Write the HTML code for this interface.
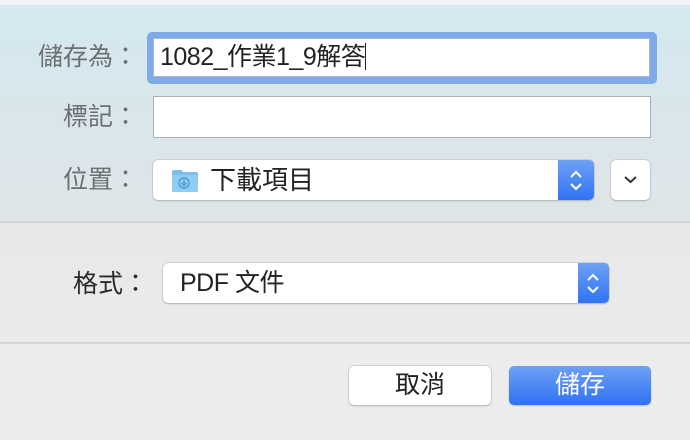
<!DOCTYPE html>
<html><head><meta charset="utf-8"><style>
*{margin:0;padding:0;box-sizing:border-box}
body{width:690px;height:440px;overflow:hidden;position:relative;font-family:"Liberation Sans","Noto Sans CJK TC",sans-serif;background:#ebebeb}
.a{position:absolute}
.lbl{color:#6c7073;font-size:25px;text-align:right;line-height:30px}
.pop{background:#fff;border-radius:5px;box-shadow:0 0 0 0.5px #b8b8b8,0 1px 1.5px rgba(0,0,0,.25)}
.step{position:absolute;right:0;top:0;bottom:0;width:36px;background:linear-gradient(#6ea1f5,#2f74f3);border-radius:0 5px 5px 0}
</style></head><body>
<div class="a" style="left:0;top:0;width:690px;height:5px;background:#f2f3f4"></div>
<div class="a" style="left:0;top:5px;width:690px;height:216px;background:linear-gradient(#d3e8ef,#dfe5e8)"></div>
<div class="a" style="left:0;top:221px;width:690px;height:2px;background:#d2d4d5"></div>
<div class="a" style="left:0;top:223px;width:690px;height:119px;background:linear-gradient(#e6e8e9,#ebebeb)"></div>
<div class="a" style="left:0;top:342px;width:690px;height:2px;background:#d4d4d4"></div>
<div class="a" style="left:0;top:344px;width:690px;height:96px;background:#ececec"></div>

<div class="a lbl" style="left:0px;top:42px;width:138px">儲存為：</div>
<div class="a" style="left:147px;top:32px;width:510px;height:52px;background:#7eaaea;border-radius:5px"></div>
<div class="a" style="left:153px;top:38px;width:497px;height:39px;background:#fff;border:1px solid #a9b9cc"></div>
<div class="a" style="left:160px;top:42px;font-size:25px;line-height:30px;color:#222;letter-spacing:-0.5px">1082_作業1_9解答<span style="display:inline-block;width:1px;height:27px;background:#222;vertical-align:-5px"></span></div>

<div class="a lbl" style="left:0px;top:102px;width:138px">標記：</div>
<div class="a" style="left:153px;top:96px;width:498px;height:42px;background:#fff;border:1px solid #aab0b3"></div>

<div class="a lbl" style="left:0px;top:165px;width:138px">位置：</div>
<div class="a pop" style="left:153px;top:160px;width:441px;height:40px">
 <svg class="a" style="left:18px;top:9px" width="28" height="24" viewBox="0 0 28 24"><path d="M1 3a2 2 0 0 1 2-2h7l2 2h13a2 2 0 0 1 2 2v16a2 2 0 0 1-2 2H3a2 2 0 0 1-2-2z" fill="#7cc0ea"/><rect x="1" y="6" width="26" height="17" rx="2" fill="#8fcdf2"/><circle cx="13" cy="14" r="5" fill="none" stroke="#4f9ed0" stroke-width="1.5"/><path d="M13 10.5v6M10.5 14l2.5 2.5 2.5-2.5" fill="none" stroke="#4f9ed0" stroke-width="1.5"/></svg>
 <div class="a" style="left:57px;top:5px;font-size:26px;line-height:30px;color:#222">下載項目</div>
 <div class="step"><svg width="36" height="40"><path d="M13 17l5-5 5 5M13 24l5 5 5-5" fill="none" stroke="#fff" stroke-width="2"/></svg></div>
</div>
<div class="a pop" style="left:611px;top:160px;width:39px;height:40px"><svg width="39" height="40"><path d="M14 17l5.5 5 5.5-5" fill="none" stroke="#333" stroke-width="2"/></svg></div>

<div class="a" style="left:73px;top:269px;font-size:25px;line-height:30px;color:#2a2a2a">格式：</div>
<div class="a pop" style="left:163px;top:263px;width:446px;height:40px">
 <div class="a" style="left:17px;top:5px;font-size:25px;line-height:30px;color:#222;letter-spacing:-0.5px">PDF 文件</div>
 <div class="step" style="width:31px"><svg width="31" height="40"><path d="M10 17l5-5 5 5M10 24l5 5 5-5" fill="none" stroke="#fff" stroke-width="2"/></svg></div>
</div>

<div class="a pop" style="left:349px;top:366px;width:142px;height:39px;text-align:center;font-size:25px;line-height:39px;color:#222">取消</div>
<div class="a" style="left:509px;top:366px;width:142px;height:39px;border-radius:5px;background:linear-gradient(#6ea1f5,#2f72f2);text-align:center;font-size:25px;line-height:39px;color:#fff;box-shadow:0 1px 1.5px rgba(0,0,0,.2)">儲存</div>
</body></html>
